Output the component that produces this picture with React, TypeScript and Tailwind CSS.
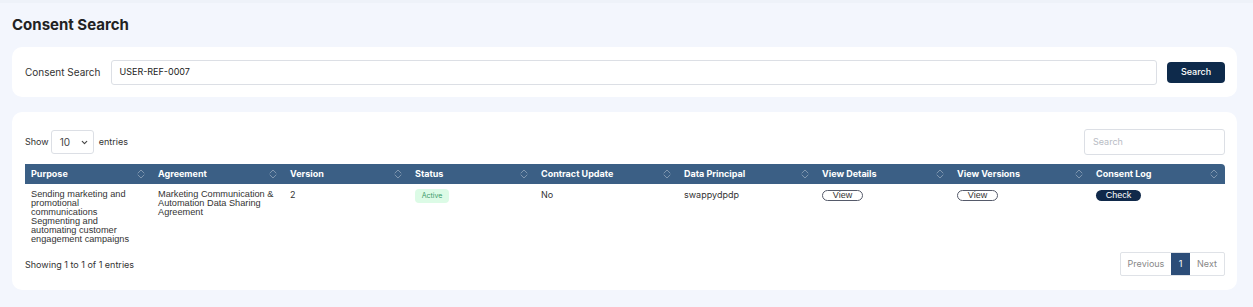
import { ChevronDown } from "lucide-react";

const cols = [
  { label: "Purpose", w: "w-[127px]" },
  { label: "Agreement", w: "w-[132px]" },
  { label: "Version", w: "w-[125px]" },
  { label: "Status", w: "w-[126px]" },
  { label: "Contract Update", w: "w-[143px]" },
  { label: "Data Principal", w: "w-[138px]" },
  { label: "View Details", w: "w-[135px]" },
  { label: "View Versions", w: "w-[139px]" },
  { label: "Consent Log", w: "w-[135px]" },
];

function SortIcon() {
  return (
    <svg width="8" height="10" viewBox="0 0 8 10" className="shrink-0 text-white/35" fill="none">
      <path d="M1 4l3-3 3 3M1 6l3 3 3-3" stroke="currentColor" strokeWidth="1" strokeLinecap="round" strokeLinejoin="round" />
    </svg>
  );
}

function PillButton({ dark, children }: { dark?: boolean; children: string }) {
  return (
    <button
      type="button"
      className={
        dark
          ? "h-[11px] w-[45px] rounded-full bg-[#10294a] text-[9px] leading-none text-white font-['Liberation_Sans',Arial,sans-serif]"
          : "h-[11px] w-[41px] rounded-full border border-[#555a6a] bg-white text-[9px] leading-none text-[#333] font-['Liberation_Sans',Arial,sans-serif]"
      }
    >
      {children}
    </button>
  );
}

export default function App() {
  return (
    <div className="min-h-[307px] w-[1253px] bg-[#f3f6fd] font-['Inter',sans-serif] text-[#222]">
      <div className="h-[3px] bg-[#eef2f9]" />
      <div className="px-3 pr-4">
        <h1 className="pt-[12px] text-[15px] font-bold leading-[20px] text-[#222]">Consent Search</h1>

        {/* search card */}
        <div className="mt-[12px] flex h-[50px] items-center rounded-[10px] bg-white pl-[13px] pr-[12px]">
          <span className="text-[10px] text-[#333]">Consent Search</span>
          <div className="ml-[10px] flex h-[25px] flex-1 items-center rounded-[3px] border border-[#dcdfe5] px-[8px] text-[9px] text-[#222]">
            USER-REF-0007
          </div>
          <button
            type="button"
            className="ml-[10px] h-[21px] w-[58px] rounded-[4px] bg-[#0e2a4b] text-[9px] font-medium text-white"
          >
            Search
          </button>
        </div>

        {/* table card */}
        <div className="mt-[15px] h-[178px] rounded-[10px] bg-white px-[13px] pt-[17px] pr-[12px]">
          <div className="flex items-center justify-between">
            <div className="flex items-center text-[9px] text-[#333]">
              <span>Show</span>
              <div className="ml-[2px] flex h-[24px] w-[43px] items-center justify-between rounded-[3px] border border-[#dcdfe5] pl-[8px] pr-[4px] text-[10px] text-[#444]">
                10
                <ChevronDown size={9} strokeWidth={3} className="text-[#444]" />
              </div>
              <span className="ml-[5px]">entries</span>
            </div>
            <div className="flex h-[26px] w-[141px] items-center rounded-[3px] border border-[#dcdfe5] px-[8px] text-[9px] text-[#b8bcc4]">
              Search
            </div>
          </div>

          <div className="mt-[9px]">
            <div className="flex h-[20px] items-center rounded-tr-[4px] bg-[#3b5f85]">
              {cols.map((c) => (
                <div key={c.label} className={`${c.w} flex items-center justify-between pl-[6px] pr-[7px] text-[9px] font-bold text-white`}>
                  <span>{c.label}</span>
                  <SortIcon />
                </div>
              ))}
            </div>
            <div className="flex pt-[6px] text-[9px] leading-[9px] text-[#333]">
              <div className="w-[127px] pl-[6px] pr-[18px] font-['Liberation_Sans',Arial,sans-serif] text-[9.2px]">
                Sending marketing and promotional communications
                <br />
                Segmenting and automating customer engagement campaigns
              </div>
              <div className="w-[132px] pl-[6px] pr-[4px] font-['Liberation_Sans',Arial,sans-serif] text-[9.2px]">
                Marketing Communication &amp; Automation Data Sharing Agreement
              </div>
              <div className="w-[125px] pl-[6px]">2</div>
              <div className="w-[126px] pl-[6px]">
                <span className="-mt-[3px] inline-flex h-[14px] w-[34px] items-center justify-center rounded-[4px] bg-[#dcfbe6] text-[7px] text-[#3d9a6a]">
                  Active
                </span>
              </div>
              <div className="w-[143px] pl-[6px]">No</div>
              <div className="w-[138px] pl-[6px]">swappydpdp</div>
              <div className="w-[135px] pl-[6px]">
                <PillButton>View</PillButton>
              </div>
              <div className="w-[139px] pl-[6px]">
                <PillButton>View</PillButton>
              </div>
              <div className="w-[135px] pl-[6px]">
                <PillButton dark>Check</PillButton>
              </div>
            </div>
          </div>

          <div className="mt-[10px] flex items-center justify-between">
            <span className="text-[9px] text-[#333]">Showing 1 to 1 of 1 entries</span>
            <div className="-mt-[2px] flex h-[24px] overflow-hidden rounded-[2px] border border-[#dfe2e7] text-[9px] text-[#888]">
              <span className="flex w-[50px] items-center justify-center">Previous</span>
              <span className="flex w-[19px] items-center justify-center bg-[#2c4d78] text-white">1</span>
              <span className="flex w-[34px] items-center justify-center">Next</span>
            </div>
          </div>
        </div>
      </div>
    </div>
  );
}
